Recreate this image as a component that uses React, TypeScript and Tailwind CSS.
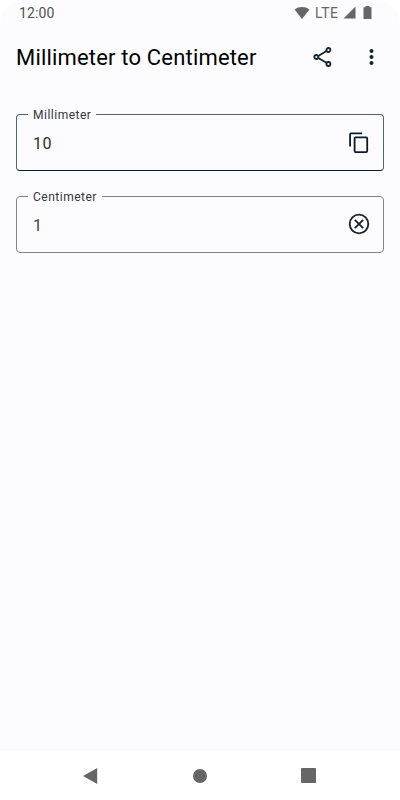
import type { ReactNode } from "react";

function Field({ label, value, valueClass, className, children }: {
  label: string;
  value: string;
  valueClass: string;
  className: string;
  children: ReactNode;
}) {
  return (
    <fieldset className={`mx-4 h-[65px] rounded-[4px] border pl-[11px] ${className}`}>
      <legend className="h-4 px-[5px] text-[12px] leading-[18px] tracking-[0.5px] text-[#30363c]">{label}</legend>
      <div className="flex h-[42px] items-center justify-between pr-3 pl-[5px]">
        <span className={`pt-[2px] text-[16px] leading-6 tracking-[0.5px] ${valueClass}`}>{value}</span>
        {children}
      </div>
    </fieldset>
  );
}

export default function App() {
  return (
    <div className="flex h-[800px] w-[400px] flex-col bg-white font-[Roboto,sans-serif]">
      <div className="flex flex-1 flex-col rounded-t-[24px] bg-[#fcfcff]">
        <header className="flex h-[25px] items-center pr-7 pl-[19px] text-[#666]">
          <span className="flex-1 text-[14px] leading-5 tracking-[0.1px] text-[#505050]">12:00</span>
          <svg width="16" height="14" viewBox="0 0 16 14" fill="#666">
            <path d="M.5 3.4C4.8.1 11.2.1 15.5 3.4L8 13z" />
          </svg>
          <span className="ml-[5px] w-[26px] text-[14px] leading-5 tracking-[0.5px]">LTE</span>
          <svg className="ml-[2px]" width="13" height="13" viewBox="0 0 13 13" fill="#666">
            <path d="M12.5.5v12H.5z" />
          </svg>
          <svg className="ml-[7px]" width="9" height="13" viewBox="0 0 9 13" fill="#666">
            <path d="M2.5 0h4v1.2h2V13H.5V1.2h2z" />
          </svg>
        </header>

        <div className="flex h-[66px] items-center pr-4 pl-4">
          <h1 className="flex-1 text-[22px] leading-7 tracking-[0.18px] whitespace-nowrap text-black">Millimeter to Centimeter</h1>
          <svg className="mb-[2px]" width="24" height="24" viewBox="0 0 24 24" fill="none" stroke="#17222a" strokeWidth="1.8">
            <path d="M6.3 11 14.4 6.1M6.3 13l8.1 4.7" />
            <circle cx="4.3" cy="12" r="2" />
            <circle cx="16.4" cy="5" r="2" />
            <circle cx="16.4" cy="19" r="2" />
          </svg>
          <svg className="mb-[2px] ml-6" width="24" height="24" viewBox="0 0 24 24" fill="#17222a">
            <circle cx="11.5" cy="6" r="2" />
            <circle cx="11.5" cy="12" r="2" />
            <circle cx="11.5" cy="18" r="2" />
          </svg>
        </div>

        <main className="flex flex-col gap-[17px] pt-[15px]">
          <Field label="Millimeter" value="10" valueClass="text-[#2c2c2e]" className="border-[#55616b] border-b-[#001c38]">
            <svg width="24" height="24" viewBox="0 0 24 24" fill="none" stroke="#0c1b2c" strokeWidth="1.8">
              <path d="M3.1 15.5V3.4q0-1 1-1h11" />
              <rect x="7.6" y="6.3" width="12.6" height="14.8" rx="1" />
            </svg>
          </Field>
          <Field label="Centimeter" value="1" valueClass="text-[#444548]" className="border-[#7f8389]">
            <svg width="24" height="24" viewBox="0 0 24 24" fill="none" stroke="#17222a" strokeWidth="1.8">
              <circle cx="12" cy="11" r="9.3" />
              <path d="m7.8 6.8 8.4 8.4m0-8.4-8.4 8.4" />
            </svg>
          </Field>
        </main>
      </div>

      <nav className="flex h-[49px] items-center pl-[82px]">
        <svg width="16" height="18" viewBox="0 0 16 18" fill="#666">
          <path d="M1 9 15.2 1v16z" />
        </svg>
        <span className="ml-[95px] size-[14px] rounded-full bg-[#666]" />
        <span className="ml-[94px] size-[15px] rounded-[1px] bg-[#666]" />
      </nav>
    </div>
  );
}
